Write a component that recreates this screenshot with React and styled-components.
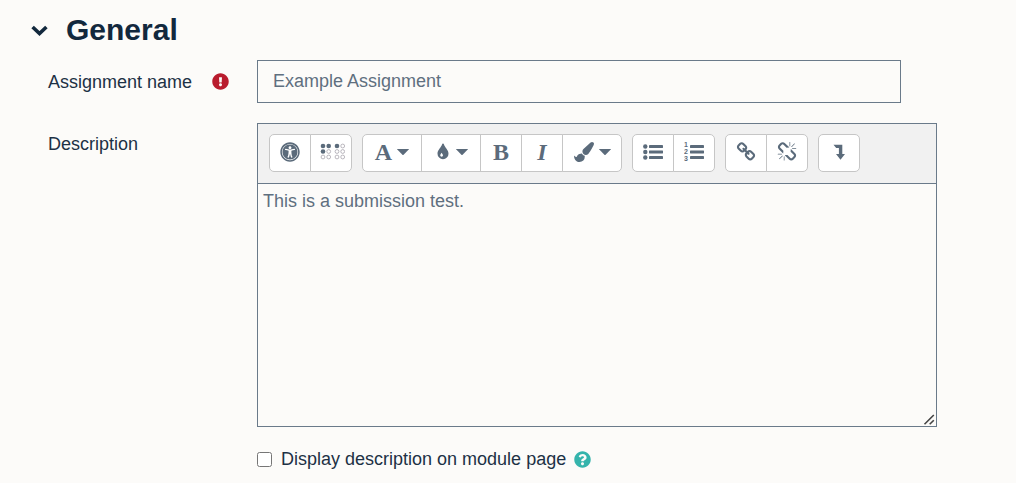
import { useState } from "react";
import styled, { createGlobalStyle } from "styled-components";
import { FaExclamationCircle, FaQuestionCircle, FaUniversalAccess } from "react-icons/fa";

const GlobalStyle = createGlobalStyle`
    * {
        box-sizing: border-box;
    }
    body {
        margin: 0;
        background-color: #fcfbf9;
        color: #1d3145;
        font-family: "Liberation Sans", Arial, sans-serif;
        font-size: 18px;
        line-height: 24px;
    }
`;

const Form = styled.form`
    padding: 10px 79px 0 31px;
`;

const SectionHeader = styled.h2`
    display: flex;
    align-items: center;
    gap: 17px;
    margin: 0 0 10px;
    color: #12283d;
    font-size: 30px;
    line-height: 40px;
`;

const Toggle = styled.button`
    display: flex;
    padding: 0;
    border: 0;
    background: none;
    color: inherit;
    cursor: pointer;
`;

const Row = styled.div`
    display: grid;
    grid-template-columns: 181px 1fr;
    gap: 28px;
    padding-left: 17px;
    margin-bottom: 20px;
`;

const LabelCell = styled.div`
    display: flex;
    align-items: flex-start;
    justify-content: space-between;
    padding-top: ${(props) => props.$top};
`;

const Required = styled(FaExclamationCircle)`
    margin-top: 3px;
    color: #b91c2e;
    font-size: 17px;
`;

const NameInput = styled.input`
    width: calc(100% - 36px);
    height: 43px;
    padding: 0 15px;
    border: 1px solid #6a7a8a;
    background-color: transparent;
    color: #5f6f7f;
    font: inherit;
`;

const Editor = styled.div`
    border: 1px solid #6a7a8a;
`;

const Toolbar = styled.div`
    display: flex;
    flex-wrap: wrap;
    gap: 10px;
    padding: 10px 11px 11px;
    border-bottom: 1px solid #6a7a8a;
    background-color: #f1f1f1;
`;

const Group = styled.div`
    display: flex;
`;

const ToolButton = styled.button`
    display: flex;
    align-items: center;
    justify-content: center;
    gap: 5px;
    width: ${(props) => (props.$menu ? "60px" : "42px")};
    height: 38px;
    padding: 0 0 2px;
    border: 1px solid #c6c6c6;
    background-color: white;
    color: #5b6b7b;
    cursor: pointer;

    & + & {
        margin-left: -1px;
    }
    &:first-child {
        border-top-left-radius: 5px;
        border-bottom-left-radius: 5px;
    }
    &:last-child {
        border-top-right-radius: 5px;
        border-bottom-right-radius: 5px;
    }
`;

const Letter = styled.span`
    font-family: "Liberation Serif", serif;
    font-size: 24px;
    font-weight: bold;
    font-style: ${(props) => (props.$italic ? "italic" : "normal")};
`;

const Content = styled.textarea`
    display: block;
    width: 100%;
    height: 242px;
    padding: 5px;
    border: 0;
    outline: none;
    background-color: transparent;
    color: #5f6f7f;
    font: inherit;
    resize: vertical;

    &::-webkit-resizer {
        background: url("data:image/svg+xml,%3Csvg xmlns='http://www.w3.org/2000/svg' width='15' height='15' stroke='%23444' stroke-width='1.6'%3E%3Cpath d='M3.5 13.3 12.8 4M8.7 13.3 12.8 9.2'/%3E%3C/svg%3E") no-repeat;
    }
`;

const CheckLabel = styled.label`
    display: flex;
    align-items: center;
    gap: 9px;
`;

const Checkbox = styled.input`
    width: 15px;
    height: 15px;
    margin: 0;
`;

const CheckRow = styled.div`
    display: flex;
    align-items: center;
    gap: 8px;
`;

const HelpButton = styled(Toggle)`
    color: #35b4ac;
    font-size: 17px;
`;

const ChevronIcon = () => (
    <svg width="18" height="14" viewBox="0 0 18 14" fill="none" stroke="currentColor" strokeWidth="3.6">
        <path d="M1.6 4 8.5 10.6 15.4 4" />
    </svg>
);

const CaretIcon = () => (
    <svg width="12" height="6" viewBox="0 0 12 6" fill="currentColor">
        <path d="M.3 0H11.7V.6L6.6 5.7Q6 6.2 5.4 5.7L.3 .6Z" />
    </svg>
);

const dots = [[1, 1, 1, 0], [1, 0, 0, 0], [0, 0, 0, 0]];
const dotX = [6, 11.7, 20, 25.7];

const BrailleIcon = () => (
    <svg width="28" height="18" viewBox="0 0 28 18">
        {dots.map((line, row) => line.map((on, col) => (
            <circle
                key={String(row) + String(col)}
                cx={dotX[col]}
                cy={3 + row * 5.5}
                r={on ? 2.3 : 1.9}
                fill={on ? "currentColor" : "none"}
                stroke={on ? "none" : "#a9a6ae"}
                strokeWidth="0.8"
            />
        )))}
    </svg>
);

const DropIcon = () => (
    <svg width="16" height="18" viewBox="-2 0 16 18" fill="currentColor">
        <path fillRule="evenodd" d="M6 .5C6.5 .5 6.8 .9 6.9 1.3 7.8 4.5 11.5 7 11.5 10.7A5.5 5.5 0 0 1 .5 10.7C.5 7 4.2 4.5 5.1 1.3 5.2 .9 5.5 .5 6 .5ZM4.6 9.7C4.3 10.5 3.2 11.3 3.2 12.3A1.4 1.4 0 0 0 6 12.3C6 11.3 4.9 10.5 4.6 9.7Z" />
    </svg>
);

const BrushIcon = () => (
    <svg width="20" height="20" viewBox="0 0 1792 1792" fill="currentColor">
        <path d="M1615 0q70 0 122.5 46.5t52.5 116.5q0 63-45 151-332 629-465 752-97 91-218 91-126 0-216.5-92.5t-90.5-219.5q0-128 92-212l638-579q59-54 130-54zm-909 1034q39 76 106.5 130t150.5 76l1 71q4 213-129.5 347t-348.5 134q-123 0-218-46.5t-152.5-127.5-86.5-183-29-220q7 5 41 30t62 44.5 59 36.5 46 17q41 0 55-37 25-66 57.5-112.5t69.5-76 88-47.5 103-25.5 125-10.5z" />
    </svg>
);

const BulletsIcon = () => (
    <svg width="20" height="18" viewBox="0 0 20 18" fill="currentColor">
        {[3.5, 9, 14.5].map((y) => (
            <g key={y}>
                <circle cx="2.3" cy={y} r="2.2" />
                <rect x="6" y={y - 1.5} width="14" height="3" rx="0.4" />
            </g>
        ))}
    </svg>
);

const NumbersIcon = () => (
    <svg width="20" height="22" viewBox="0 0 20 22" fill="currentColor">
        {[5.5, 11, 16.5].map((y, index) => (
            <g key={y}>
                <text x="0" y={6 + index * 7} fontSize="7" fontWeight="bold" fontFamily="Liberation Sans">{index + 1}</text>
                <rect x="6" y={y - 1.5} width="14" height="3" rx="0.4" />
            </g>
        ))}
    </svg>
);

const LinkIcon = () => (
    <svg width="20" height="20" viewBox="0 0 1792 1792" fill="currentColor">
        <path d="M1520 1216q0-40-28-68l-208-208q-28-28-68-28-42 0-72 32 3 3 19 18.5t21.5 21.5 15 19 13 25.5 3.5 27.5q0 40-28 68t-68 28q-15 0-27.5-3.5t-25.5-13-19-15-21.5-21.5-18.5-19q-33 31-33 73 0 40 28 68l206 207q27 27 68 27 40 0 68-26l147-146q28-28 28-67zm-703-705q0-40-28-68l-206-207q-28-28-68-28-39 0-68 27l-147 146q-28 28-28 67 0 40 28 68l208 208q27 27 68 27 42 0 72-31-3-3-19-18.5t-21.5-21.5-15-19-13-25.5-3.5-27.5q0-40 28-68t68-28q15 0 27.5 3.5t25.5 13 19 15 21.5 21.5 18.5 19q33-31 33-73zm895 705q0 120-85 203l-147 146q-83 83-203 83-121 0-204-85l-206-207q-83-83-83-203 0-123 88-209l-88-88q-86 88-208 88-120 0-204-84l-208-208q-84-84-84-204t85-203l147-146q83-83 203-83 121 0 204 85l206 207q83 83 83 203 0 123-88 209l88 88q86-88 208-88 120 0 204 84l208 208q84 84 84 204z" />
    </svg>
);

const UnlinkIcon = () => (
    <svg width="20" height="20" viewBox="0 0 1792 1792" fill="currentColor">
        <path d="M503 1271l-256 256q-10 9-23 9-12 0-23-9-9-10-9-23t9-23l256-256q10-9 23-9t23 9q9 10 9 23t-9 23zm169 41v320q0 14-9 23t-23 9-23-9-9-23v-320q0-14 9-23t23-9 23 9 9 23zm-224-224q0 14-9 23t-23 9h-320q-14 0-23-9t-9-23 9-23 23-9h320q14 0 23 9t9 23zm1264 128q0 120-85 203l-147 146q-83 83-203 83-121 0-204-85l-334-335q-21-21-42-56l239-18 273 274q28 28 68 27.5t68-27.5l147-146q28-28 28-67 0-40-28-68l-274-275 18-239q35 21 56 42l336 336q84 86 84 204zm-617-724l-239 18-273-274q-28-28-68-28-39 0-68 27l-147 146q-28 28-28 67 0 40 28 68l274 274-18 240q-35-21-56-42l-336-336q-84-86-84-204 0-120 85-203l147-146q83-83 203-83 121 0 204 85l334 335q21 21 42 56zm633 84q0 14-9 23t-23 9h-320q-14 0-23-9t-9-23 9-23 23-9h320q14 0 23 9t9 23zm-544-544v320q0 14-9 23t-23 9-23-9-9-23v-320q0-14 9-23t23-9 23 9 9 23zm407 151l-256 256q-11 9-23 9t-23-9q-9-10-9-23t9-23l256-256q10-9 23-9t23 9q9 10 9 23t-9 23z" />
    </svg>
);

const MoreIcon = () => (
    <svg width="12" height="16" viewBox="0 0 12 16" fill="currentColor">
        <path d="M.5 .8H9.3V10H12L7.5 15.8 3 10H5.9V4H3.2Z" />
    </svg>
);

const groups = [
    [
        { name: "Accessibility checker", icon: <FaUniversalAccess size={20} /> },
        { name: "Screenreader helper", icon: <BrailleIcon /> },
    ],
    [
        { name: "Paragraph styles", icon: <Letter>A</Letter>, menu: true },
        { name: "Font colour", icon: <DropIcon />, menu: true },
        { name: "Bold", icon: <Letter>B</Letter> },
        { name: "Italic", icon: <Letter $italic>I</Letter> },
        { name: "Background colour", icon: <BrushIcon />, menu: true },
    ],
    [
        { name: "Unordered list", icon: <BulletsIcon /> },
        { name: "Ordered list", icon: <NumbersIcon /> },
    ],
    [
        { name: "Link", icon: <LinkIcon /> },
        { name: "Unlink", icon: <UnlinkIcon /> },
    ],
    [{ name: "Show more buttons", icon: <MoreIcon /> }],
];

function App() {

    const [open, setOpen] = useState(true);
    const [name, setName] = useState("Example Assignment");
    const [description, setDescription] = useState("This is a submission test.");
    const [display, setDisplay] = useState(false);

    return (
        <Form onSubmit={(e) => e.preventDefault()}>
            <GlobalStyle />
            <SectionHeader>
                <Toggle type="button" aria-label="Toggle section" aria-expanded={open} onClick={() => setOpen(!open)}>
                    <ChevronIcon />
                </Toggle>
                General
            </SectionHeader>
            {open && <>
                <Row>
                    <LabelCell $top="10px">
                        <label htmlFor="name">Assignment name</label>
                        <Required aria-label="Required" />
                    </LabelCell>
                    <NameInput id="name" type="text" value={name} onChange={(e) => setName(e.target.value)} />
                </Row>
                <Row>
                    <LabelCell $top="9px">
                        <label htmlFor="description">Description</label>
                    </LabelCell>
                    <Editor>
                        <Toolbar role="toolbar" aria-label="Editor">
                            {groups.map((tools, index) => (
                                <Group key={index}>
                                    {tools.map((tool) => (
                                        <ToolButton key={tool.name} type="button" aria-label={tool.name} $menu={tool.menu}>
                                            {tool.icon}
                                            {tool.menu && <CaretIcon />}
                                        </ToolButton>
                                    ))}
                                </Group>
                            ))}
                        </Toolbar>
                        <Content id="description" value={description} onChange={(e) => setDescription(e.target.value)} />
                    </Editor>
                </Row>
                <Row>
                    <span />
                    <CheckRow>
                        <CheckLabel>
                            <Checkbox type="checkbox" checked={display} onChange={(e) => setDisplay(e.target.checked)} />
                            Display description on module page
                        </CheckLabel>
                        <HelpButton type="button" aria-label="Help with display description">
                            <FaQuestionCircle />
                        </HelpButton>
                    </CheckRow>
                </Row>
            </>}
        </Form>
    );
}

export default App;
